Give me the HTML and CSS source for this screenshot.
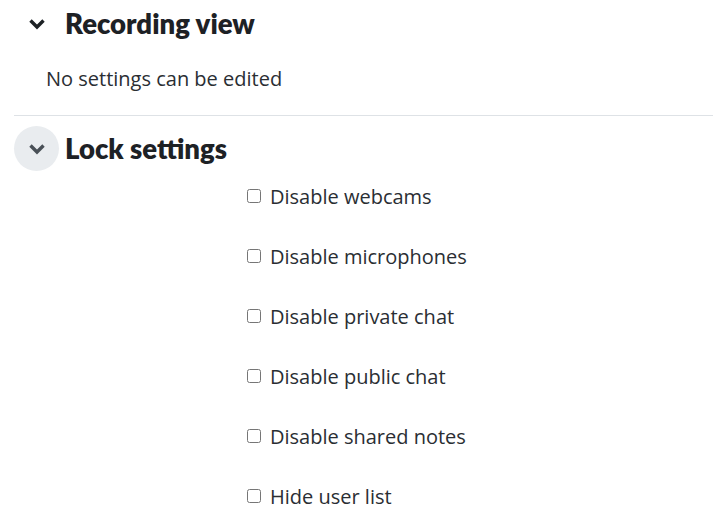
FILE: index.html
```html
<!DOCTYPE html>
<html lang="en">
<head>
    <meta charset="UTF-8">
    <title>Settings</title>
    <link rel="stylesheet" href="styles.css">
</head>
<body>
    <div class="settingsPage">
        <section class="settingsSection">
            <div class="sectionHeader">
                <span class="toggleIcon">
                    <svg width="18" height="12" viewBox="0 0 18 12"><path d="M2.5 2.5 L9 9 L15.5 2.5" fill="none" stroke="#1d2125" stroke-width="3.4" stroke-linecap="butt"/></svg>
                </span>
                <h3 class="sectionTitle">Recording view</h3>
            </div>
            <p class="sectionNote">No settings can be edited</p>
        </section>

        <section class="settingsSection bordered">
            <div class="sectionHeader">
                <span class="toggleIcon hovered">
                    <svg width="18" height="12" viewBox="0 0 18 12"><path d="M2.5 2.5 L9 9 L15.5 2.5" fill="none" stroke="#495057" stroke-width="3.4" stroke-linecap="butt"/></svg>
                </span>
                <h3 class="sectionTitle">Lock settings</h3>
            </div>
            <div class="checkList">
                <label class="checkItem"><input type="checkbox"> Disable webcams</label>
                <label class="checkItem"><input type="checkbox"> Disable microphones</label>
                <label class="checkItem"><input type="checkbox"> Disable private chat</label>
                <label class="checkItem"><input type="checkbox"> Disable public chat</label>
                <label class="checkItem"><input type="checkbox"> Disable shared notes</label>
                <label class="checkItem"><input type="checkbox"> Hide user list</label>
            </div>
        </section>
    </div>
</body>
</html>
```

FILE: styles.css
```css
body {
    margin: 0;
    background: #fff;
    color: #1d2125;
    font-family: "Open Sans", "Liberation Sans", sans-serif;
}
.settingsPage {
    padding: 1px 0 0 14px;
}
.sectionHeader {
    display: flex;
    align-items: center;
    gap: 6px;
}
.toggleIcon {
    display: flex;
    align-items: center;
    justify-content: center;
    width: 45px;
    height: 45px;
    border-radius: 50%;
}
.toggleIcon.hovered {
    background: #e9ecef;
}
.sectionTitle {
    margin: 0;
    font-family: "Lato", "Liberation Sans", sans-serif;
    font-size: 27.5px;
    font-weight: 800;
    color: #1d2125;
}
.sectionNote {
    margin: 21px 0 0 32px;
    font-size: 20px;
    line-height: 24px;
    color: #2a2e33;
}
.bordered {
    margin-top: 24px;
    border-top: 1px solid #dee2e6;
    padding-top: 10px;
}
.checkList {
    display: flex;
    flex-direction: column;
    padding-left: 233px;
    padding-top: 13px;
}
.checkItem {
    display: flex;
    align-items: center;
    height: 24px;
    margin-bottom: 36px;
    font-size: 20px;
    color: #2a2e33;
}
.checkItem input {
    width: 14px;
    height: 14px;
    margin: 0 9px 0 0;
}
```
